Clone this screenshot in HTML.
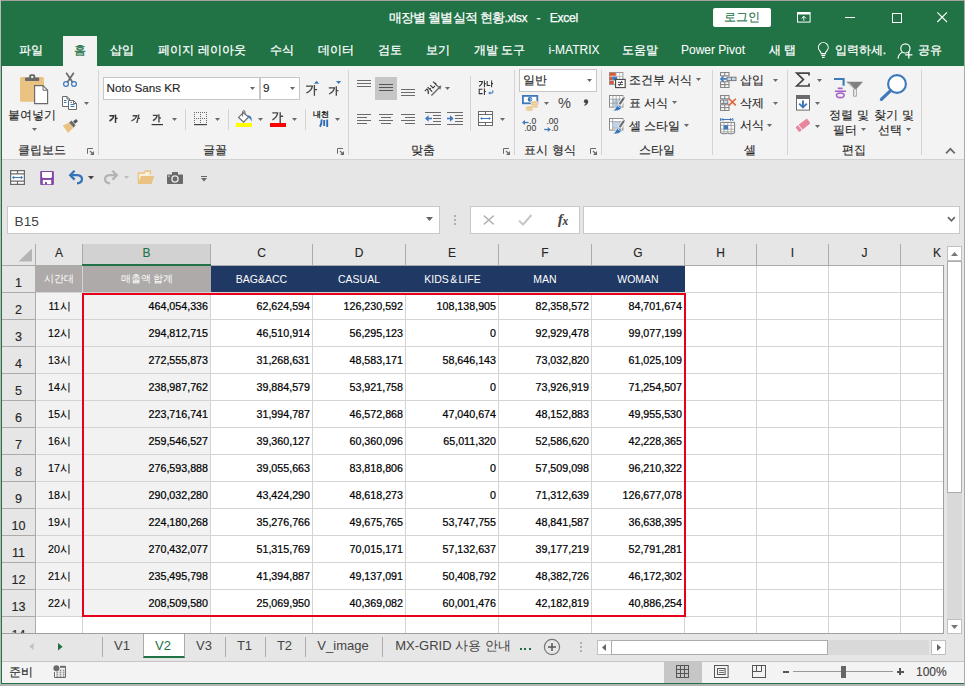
<!DOCTYPE html>
<html lang="ko"><head><meta charset="utf-8"><title>Excel</title>
<style>
html,body{margin:0;padding:0}
body{width:965px;height:686px;position:relative;overflow:hidden;background:#e6e6e6;font-family:"Liberation Sans",sans-serif;font-size:12px;color:#262626}
div{position:absolute;box-sizing:border-box}
svg{position:absolute;overflow:visible}
.t{overflow:visible;-webkit-text-stroke:0.13px}
</style></head>
<body>
<div style="left:0px;top:0px;width:965px;height:66px;background:#217346"></div>
<div class="t" style="left:333.3px;top:10.0px;width:300px;height:16px;line-height:16px;font-size:12.8px;text-align:center;white-space:nowrap;color:#fff;-webkit-text-stroke:0.25px #fff;"><span style="letter-spacing:-0.76px">매장별 월별실적 현황</span><span style="font-size:12.2px;letter-spacing:-0.3px;word-spacing:6.2px">.xlsx - Excel</span></div>
<div style="left:713px;top:8px;width:58px;height:19px;background:#fff;border-radius:2px"></div>
<div class="t" style="left:713.0px;top:9.2px;width:58px;height:16px;line-height:16px;font-size:12px;text-align:center;white-space:nowrap;color:#217346;">로그인</div>
<div style="left:63px;top:36px;width:34px;height:30px;background:#f3f3f3"></div>
<div class="t" style="left:-29.0px;top:41.5px;width:120px;height:16px;line-height:16px;font-size:12px;text-align:center;white-space:nowrap;color:#fff;-webkit-text-stroke:0.25px #fff;">파일</div>
<div class="t" style="left:20.0px;top:41.5px;width:120px;height:16px;line-height:16px;font-size:12px;text-align:center;white-space:nowrap;color:#217346;-webkit-text-stroke:0.25px #217346;">홈</div>
<div class="t" style="left:62.0px;top:41.5px;width:120px;height:16px;line-height:16px;font-size:12px;text-align:center;white-space:nowrap;color:#fff;-webkit-text-stroke:0.25px #fff;">삽입</div>
<div class="t" style="left:142.0px;top:41.5px;width:120px;height:16px;line-height:16px;font-size:12px;text-align:center;white-space:nowrap;color:#fff;-webkit-text-stroke:0.25px #fff;">페이지 레이아웃</div>
<div class="t" style="left:221.5px;top:41.5px;width:120px;height:16px;line-height:16px;font-size:12px;text-align:center;white-space:nowrap;color:#fff;-webkit-text-stroke:0.25px #fff;">수식</div>
<div class="t" style="left:275.5px;top:41.5px;width:120px;height:16px;line-height:16px;font-size:12px;text-align:center;white-space:nowrap;color:#fff;-webkit-text-stroke:0.25px #fff;">데이터</div>
<div class="t" style="left:329.5px;top:41.5px;width:120px;height:16px;line-height:16px;font-size:12px;text-align:center;white-space:nowrap;color:#fff;-webkit-text-stroke:0.25px #fff;">검토</div>
<div class="t" style="left:377.5px;top:41.5px;width:120px;height:16px;line-height:16px;font-size:12px;text-align:center;white-space:nowrap;color:#fff;-webkit-text-stroke:0.25px #fff;">보기</div>
<div class="t" style="left:439.5px;top:41.5px;width:120px;height:16px;line-height:16px;font-size:12px;text-align:center;white-space:nowrap;color:#fff;-webkit-text-stroke:0.25px #fff;">개발 도구</div>
<div class="t" style="left:514.0px;top:41.5px;width:120px;height:16px;line-height:16px;font-size:12px;text-align:center;white-space:nowrap;color:#fff;-webkit-text-stroke:0.05px #fff;">i-MATRIX</div>
<div class="t" style="left:579.5px;top:41.5px;width:120px;height:16px;line-height:16px;font-size:12px;text-align:center;white-space:nowrap;color:#fff;-webkit-text-stroke:0.25px #fff;">도움말</div>
<div class="t" style="left:653.0px;top:41.5px;width:120px;height:16px;line-height:16px;font-size:12px;text-align:center;white-space:nowrap;color:#fff;-webkit-text-stroke:0.05px #fff;">Power Pivot</div>
<div class="t" style="left:722.5px;top:41.5px;width:120px;height:16px;line-height:16px;font-size:12px;text-align:center;white-space:nowrap;color:#fff;-webkit-text-stroke:0.25px #fff;">새 탭</div>
<div class="t" style="left:800.5px;top:41.5px;width:120px;height:16px;line-height:16px;font-size:12px;text-align:center;white-space:nowrap;color:#fff;-webkit-text-stroke:0.25px #fff;">입력하세.</div>
<div class="t" style="left:869.5px;top:41.5px;width:120px;height:16px;line-height:16px;font-size:12px;text-align:center;white-space:nowrap;color:#fff;-webkit-text-stroke:0.25px #fff;">공유</div>
<div style="left:2px;top:66px;width:962px;height:93px;background:#f3f3f3"></div>
<div style="left:2px;top:159px;width:962px;height:1px;background:#d2d2d2"></div>
<svg style="left:18px;top:72px" width="32" height="34" viewBox="0 0 32 34"><rect x="2" y="5" width="24" height="24.8" rx="1.6" fill="#eac282"/><rect x="7" y="5.5" width="14.2" height="3.6" rx="0.8" fill="#6a6a6a"/><rect x="11.2" y="2.2" width="6" height="5" rx="1.6" fill="#6a6a6a"/><rect x="13.2" y="4" width="2" height="2" fill="#f3f3f3"/><path d="M16.6,13.6 H25 L29.6,18.2 V31.6 H16.6 Z" fill="#fff" stroke="#6a6a6a" stroke-width="1.15"/><path d="M25,13.6 V18.2 H29.6" fill="none" stroke="#6a6a6a" stroke-width="1"/></svg>
<div class="t" style="left:2.0px;top:106.5px;width:60px;height:16px;line-height:16px;font-size:11.6px;text-align:center;white-space:nowrap;color:#262626;">붙여넣기</div>
<svg style="left:32.0px;top:128.0px" width="5" height="3" viewBox="0 0 5 3"><polygon points="0,0 5,0 2.5,3" fill="#6a6a6a"/></svg>
<div class="t" style="left:12.0px;top:141.5px;width:60px;height:16px;line-height:16px;font-size:11.6px;text-align:center;white-space:nowrap;color:#262626;">클립보드</div>
<svg style="left:87px;top:148px" width="7" height="7" viewBox="0 0 7 7"><path d="M0.5,5.8 V0.5 H6" fill="none" stroke="#6a6a6a" stroke-width="1"/><path d="M3,3 L5.5,5.5" stroke="#6a6a6a" stroke-width="1.1"/><polygon points="3,7 7,7 7,3" fill="#6a6a6a"/></svg>
<svg style="left:62px;top:72px" width="16" height="16" viewBox="0 0 16 16"><path d="M4.2,0.8 L10.6,10.2 M11.8,0.8 L5.4,10.2" stroke="#6a6a6a" stroke-width="1.7" fill="none"/><circle cx="4" cy="12" r="2.4" fill="none" stroke="#3d79bb" stroke-width="1.2"/><circle cx="12" cy="12" r="2.4" fill="none" stroke="#3d79bb" stroke-width="1.2"/></svg>
<svg style="left:62px;top:96px" width="16" height="14" viewBox="0 0 16 14"><path d="M0.5,0.5 H5 L7.5,3 V10.5 H0.5 Z" fill="#fff" stroke="#6a6a6a"/><path d="M5,0.5 V3 H7.5" fill="none" stroke="#6a6a6a"/><path d="M6.5,4.5 H11.5 L14.5,7.5 V13.5 H6.5 Z" fill="#fff" stroke="#6a6a6a"/><path d="M11.5,4.5 V7.5 H14.5" fill="none" stroke="#6a6a6a"/><path d="M2,4.5 H4.5 M2,6.5 H4.5 M8.5,8.5 H12.5 M8.5,10.5 H12.5 M8.5,6.5 H10" stroke="#3d79bb" stroke-width="1"/></svg>
<svg style="left:84.2px;top:102.3px" width="5" height="3" viewBox="0 0 5 3"><polygon points="0,0 5,0 2.5,3" fill="#6a6a6a"/></svg>
<svg style="left:62px;top:118px" width="17" height="16" viewBox="0 0 17 16"><polygon points="0.8,7.6 7.2,4.6 11.6,9.4 6,15" fill="#eac282"/><polygon points="7.2,4.6 9.4,2.6 13.6,7.2 11.6,9.4" fill="#6a6a6a"/><polygon points="11,3.6 14,1 16,3.2 13,5.8" fill="#555"/></svg>
<div style="left:98px;top:70px;width:1px;height:85px;background:#d4d4d4"></div>
<div style="left:103px;top:77px;width:157px;height:23px;background:#fff;border:1px solid #c6c6c6"></div>
<div style="left:260px;top:77px;width:40px;height:23px;background:#fff;border:1px solid #c6c6c6"></div>
<div class="t" style="left:106.5px;top:79.5px;width:200px;height:16px;line-height:16px;font-size:11.7px;text-align:left;white-space:nowrap;color:#262626;">Noto Sans KR</div>
<div class="t" style="left:263px;top:79.5px;width:200px;height:16px;line-height:16px;font-size:11.7px;text-align:left;white-space:nowrap;color:#262626;">9</div>
<svg style="left:250.0px;top:87.2px" width="5" height="3" viewBox="0 0 5 3"><polygon points="0,0 5,0 2.5,3" fill="#6a6a6a"/></svg>
<svg style="left:290.0px;top:87.2px" width="5" height="3" viewBox="0 0 5 3"><polygon points="0,0 5,0 2.5,3" fill="#6a6a6a"/></svg>
<svg style="left:304px;top:80px" width="40" height="17" viewBox="0 0 40 17"><g fill="none" stroke="#444" stroke-width="1.3"><path d="M2,6.1 H8.4 Q7.6,10.6 2.3,13"/><path d="M10.4,5 V15.8 M10.4,9.6 H13.1"/><path d="M24.8,7.9 H30.4 Q29.8,11.8 25.1,14"/><path d="M32.3,6.2 V15.8 M32.3,10.7 H34.4"/></g><polygon points="10,3.8 12.6,0.7 15.2,3.8" fill="#3d79bb"/><polygon points="32,1 37.2,1 34.6,3.9" fill="#3d79bb"/></svg>
<svg style="left:108px;top:113px" width="60" height="14" viewBox="0 0 60 14"><g transform="translate(1.2,1.6) scale(0.82)" fill="none" stroke="#333" stroke-width="1.75" ><path d="M0.3,1.4 H5.6 Q5,5.6 0.4,7.8"/><path d="M7.7,0 V10.2"/><path d="M7.7,4.6 H10.2"/></g><g transform="translate(24.6,1.6) scale(0.82) skewX(-14)" fill="none" stroke="#444" stroke-width="1.65" transform-origin="0 0"><path d="M0.3,1.4 H5.6 Q5,5.6 0.4,7.8"/><path d="M7.7,0 V10.2"/><path d="M7.7,4.6 H10.2"/></g><g transform="translate(44.6,1.2) scale(0.82)" fill="none" stroke="#444" stroke-width="1.65" ><path d="M0.3,1.4 H5.6 Q5,5.6 0.4,7.8"/><path d="M7.7,0 V10.2"/><path d="M7.7,4.6 H10.2"/></g><path d="M43.6,11.6 H55" stroke="#333" stroke-width="1.2"/></svg>
<svg style="left:172.1px;top:118.0px" width="5" height="3" viewBox="0 0 5 3"><polygon points="0,0 5,0 2.5,3" fill="#6a6a6a"/></svg>
<div style="left:185px;top:109px;width:1px;height:21px;background:#d4d4d4"></div>
<svg style="left:194px;top:112px" width="14" height="14" viewBox="0 0 14 14"><g fill="#6a6a6a"><rect x="0" y="0" width="1" height="1"/><rect x="0" y="6" width="1" height="1"/><rect x="0" y="0" width="1" height="1"/><rect x="6" y="0" width="1" height="1"/><rect x="12" y="0" width="1" height="1"/><rect x="2" y="0" width="1" height="1"/><rect x="2" y="6" width="1" height="1"/><rect x="0" y="2" width="1" height="1"/><rect x="6" y="2" width="1" height="1"/><rect x="12" y="2" width="1" height="1"/><rect x="4" y="0" width="1" height="1"/><rect x="4" y="6" width="1" height="1"/><rect x="0" y="4" width="1" height="1"/><rect x="6" y="4" width="1" height="1"/><rect x="12" y="4" width="1" height="1"/><rect x="6" y="0" width="1" height="1"/><rect x="6" y="6" width="1" height="1"/><rect x="0" y="6" width="1" height="1"/><rect x="6" y="6" width="1" height="1"/><rect x="12" y="6" width="1" height="1"/><rect x="8" y="0" width="1" height="1"/><rect x="8" y="6" width="1" height="1"/><rect x="0" y="8" width="1" height="1"/><rect x="6" y="8" width="1" height="1"/><rect x="12" y="8" width="1" height="1"/><rect x="10" y="0" width="1" height="1"/><rect x="10" y="6" width="1" height="1"/><rect x="0" y="10" width="1" height="1"/><rect x="6" y="10" width="1" height="1"/><rect x="12" y="10" width="1" height="1"/><rect x="12" y="0" width="1" height="1"/><rect x="12" y="6" width="1" height="1"/><rect x="0" y="12" width="1" height="1"/><rect x="6" y="12" width="1" height="1"/><rect x="12" y="12" width="1" height="1"/><rect x="0" y="12" width="13" height="1.2" fill="#444"/></g></svg>
<svg style="left:214.9px;top:118.0px" width="5" height="3" viewBox="0 0 5 3"><polygon points="0,0 5,0 2.5,3" fill="#6a6a6a"/></svg>
<div style="left:228px;top:109px;width:1px;height:21px;background:#d4d4d4"></div>
<svg style="left:235px;top:110px" width="19" height="18" viewBox="0 0 19 18"><path d="M8.2,2.6 L3.6,7.4 L8.6,12.2 L13.6,7 Z" fill="#fff" stroke="#6a6a6a" stroke-width="1.15"/><path d="M7.6,6.4 V2 Q7.6,0.6 8.8,0.6 Q10,0.6 10,2 V4.4" fill="none" stroke="#6a6a6a" stroke-width="1"/><path d="M12.6,5.2 Q17.6,5.6 16.6,11.6 Q15.6,8.4 13.4,7.6 Z" fill="#3d79bb"/><rect x="0.8" y="13" width="16.2" height="4" fill="#ffff00"/></svg>
<svg style="left:258.0px;top:118.1px" width="5" height="3" viewBox="0 0 5 3"><polygon points="0,0 5,0 2.5,3" fill="#6a6a6a"/></svg>
<svg style="left:269px;top:110px" width="18" height="18" viewBox="0 0 18 18"><g fill="none" stroke="#4a4a4a" stroke-width="1.4"><path d="M3.3,2.9 H8.6 Q8,7.4 3.4,9.8"/><path d="M11.2,2.2 V13 M11.2,6.2 H14.1"/></g><rect x="1" y="13" width="16" height="4" fill="#ff0000"/></svg>
<svg style="left:292.0px;top:118.1px" width="5" height="3" viewBox="0 0 5 3"><polygon points="0,0 5,0 2.5,3" fill="#6a6a6a"/></svg>
<div style="left:305px;top:109px;width:1px;height:21px;background:#d4d4d4"></div>
<div class="t" style="left:306.0px;top:110.1px;width:30px;height:9px;line-height:9px;font-size:7.6px;text-align:center;white-space:nowrap;color:#111;-webkit-text-stroke:0.3px;">내천</div>
<svg style="left:319px;top:119px" width="10" height="9" viewBox="0 0 10 9"><path d="M2.6,0.4 Q2.8,5 1,7.8 M5.2,1 V7 M8.2,0.4 V8" fill="none" stroke="#2e6db4" stroke-width="1.9"/></svg>
<svg style="left:334.9px;top:118.1px" width="5" height="3" viewBox="0 0 5 3"><polygon points="0,0 5,0 2.5,3" fill="#6a6a6a"/></svg>
<div class="t" style="left:185.0px;top:141.5px;width:60px;height:16px;line-height:16px;font-size:11.6px;text-align:center;white-space:nowrap;color:#262626;">글꼴</div>
<svg style="left:337px;top:148px" width="7" height="7" viewBox="0 0 7 7"><path d="M0.5,5.8 V0.5 H6" fill="none" stroke="#6a6a6a" stroke-width="1"/><path d="M3,3 L5.5,5.5" stroke="#6a6a6a" stroke-width="1.1"/><polygon points="3,7 7,7 7,3" fill="#6a6a6a"/></svg>
<div style="left:348px;top:70px;width:1px;height:85px;background:#d4d4d4"></div>
<div style="left:357px;top:80px;width:14px;height:1px;background:#6a6a6a"></div><div style="left:357px;top:83px;width:14px;height:1px;background:#6a6a6a"></div><div style="left:357px;top:86px;width:14px;height:1px;background:#6a6a6a"></div>
<div style="left:375px;top:77px;width:22px;height:23px;background:#c6c6c6"></div>
<div style="left:379px;top:84px;width:14px;height:1px;background:#555"></div><div style="left:379px;top:87px;width:14px;height:1px;background:#555"></div><div style="left:379px;top:90px;width:14px;height:1px;background:#555"></div>
<div style="left:401px;top:89px;width:14px;height:1px;background:#6a6a6a"></div><div style="left:401px;top:92px;width:14px;height:1px;background:#6a6a6a"></div><div style="left:401px;top:95px;width:14px;height:1px;background:#6a6a6a"></div>
<svg style="left:423px;top:79px" width="20" height="19" viewBox="0 0 20 19"><path d="M8.4,16.4 L16.6,8.2" stroke="#6a6a6a" stroke-width="1.4"/><polygon points="18.4,6.4 17.4,10.8 14,7.4" fill="#6a6a6a"/><g transform="translate(1.4,11.6) rotate(-45)" fill="none" stroke="#333" stroke-width="1.05"><path d="M0,0.6 H3 Q3,3.6 0.2,5.2"/><path d="M4.8,-0.2 V6.2 M4.8,2.8 H6.2"/><path d="M8,0.4 V4.2 H10.8"/><path d="M12.4,-0.2 V6.2 M12.4,2.8 H13.8"/></g></svg>
<svg style="left:445.1px;top:87.1px" width="5" height="3" viewBox="0 0 5 3"><polygon points="0,0 5,0 2.5,3" fill="#6a6a6a"/></svg>
<div style="left:470px;top:76px;width:1px;height:55px;background:#d4d4d4"></div>
<svg style="left:478px;top:80px" width="17" height="16" viewBox="0 0 17 16"><g fill="none" stroke="#333" stroke-width="1.05"><path d="M1,1.4 H4.4 Q4.2,4.6 1,6.4"/><path d="M6.4,0.4 V7.2 M6.4,3.6 H7.8"/><path d="M9.2,1 V5.4 H12.2"/><path d="M13.6,0.4 V7.2 M13.6,3.6 H15"/><path d="M4.4,9.2 H1.2 V13.6 H4.6"/><path d="M6.4,8.4 V15 M6.4,11.4 H7.8"/></g></svg>
<svg style="left:488px;top:90px" width="6" height="6" viewBox="0 0 6 6"><path d="M4.8,0.2 V3 H1.4" fill="none" stroke="#3d79bb" stroke-width="1"/><polygon points="0.2,3 2.4,1.2 2.4,4.8" fill="#3d79bb"/></svg>
<div style="left:357px;top:114px;width:14px;height:1px;background:#6a6a6a"></div><div style="left:357px;top:117px;width:10px;height:1px;background:#6a6a6a"></div><div style="left:357px;top:120px;width:14px;height:1px;background:#6a6a6a"></div><div style="left:357px;top:123px;width:10px;height:1px;background:#6a6a6a"></div>
<div style="left:379.0px;top:114px;width:14px;height:1px;background:#6a6a6a"></div><div style="left:381.0px;top:117px;width:10px;height:1px;background:#6a6a6a"></div><div style="left:379.0px;top:120px;width:14px;height:1px;background:#6a6a6a"></div><div style="left:381.0px;top:123px;width:10px;height:1px;background:#6a6a6a"></div>
<div style="left:401px;top:114px;width:14px;height:1px;background:#6a6a6a"></div><div style="left:405px;top:117px;width:10px;height:1px;background:#6a6a6a"></div><div style="left:401px;top:120px;width:14px;height:1px;background:#6a6a6a"></div><div style="left:405px;top:123px;width:10px;height:1px;background:#6a6a6a"></div>
<svg style="left:425px;top:112px" width="16" height="13" viewBox="0 0 16 13"><path d="M0,0.5 H16 M8,3.5 H16 M8,6.5 H16 M8,9.5 H16 M0,12.5 H16" stroke="#6a6a6a" stroke-width="1"/><path d="M1.2,6.5 H7" stroke="#3d79bb" stroke-width="1.6"/><polygon points="0,6.5 3.6,3.2 3.6,9.8" fill="#3d79bb"/></svg>
<svg style="left:447px;top:112px" width="16" height="13" viewBox="0 0 16 13"><path d="M0,0.5 H16 M8,3.5 H16 M8,6.5 H16 M8,9.5 H16 M0,12.5 H16" stroke="#6a6a6a" stroke-width="1"/><path d="M0,6.5 H5.2" stroke="#3d79bb" stroke-width="1.6"/><polygon points="6.6,6.5 3,3.2 3,9.8" fill="#3d79bb"/></svg>
<svg style="left:478px;top:111px" width="15" height="15" viewBox="0 0 15 15"><rect x="0.5" y="0.5" width="14" height="14" fill="#fff" stroke="#6a6a6a"/><path d="M0.5,3.5 H14.5 M0.5,11.5 H14.5 M7.5,0.5 V3.5 M7.5,11.5 V14.5" stroke="#6a6a6a" stroke-width="1"/><path d="M3,7.5 H12" stroke="#3d79bb" stroke-width="1"/><polygon points="2,7.5 4.2,5.9 4.2,9.1" fill="#3d79bb"/><polygon points="13,7.5 10.8,5.9 10.8,9.1" fill="#3d79bb"/></svg>
<svg style="left:500.0px;top:118.1px" width="5" height="3" viewBox="0 0 5 3"><polygon points="0,0 5,0 2.5,3" fill="#6a6a6a"/></svg>
<div class="t" style="left:393.0px;top:141.5px;width:60px;height:16px;line-height:16px;font-size:11.6px;text-align:center;white-space:nowrap;color:#262626;">맞춤</div>
<svg style="left:503px;top:148px" width="7" height="7" viewBox="0 0 7 7"><path d="M0.5,5.8 V0.5 H6" fill="none" stroke="#6a6a6a" stroke-width="1"/><path d="M3,3 L5.5,5.5" stroke="#6a6a6a" stroke-width="1.1"/><polygon points="3,7 7,7 7,3" fill="#6a6a6a"/></svg>
<div style="left:514px;top:70px;width:1px;height:85px;background:#d4d4d4"></div>
<div style="left:519px;top:69px;width:78px;height:23px;background:#fff;border:1px solid #c6c6c6"></div>
<div class="t" style="left:522.5px;top:71.5px;width:200px;height:16px;line-height:16px;font-size:11.6px;text-align:left;white-space:nowrap;color:#262626;">일반</div>
<svg style="left:586.9px;top:79.2px" width="5" height="3" viewBox="0 0 5 3"><polygon points="0,0 5,0 2.5,3" fill="#6a6a6a"/></svg>
<svg style="left:522px;top:95px" width="17" height="17" viewBox="0 0 17 17"><rect x="0.9" y="0.9" width="14.4" height="7.4" fill="#fff" stroke="#3d79bb" stroke-width="1.8"/><circle cx="8" cy="4.4" r="2.3" fill="#3d79bb"/><path d="M8.4,3.4 Q9.8,4.4 8.6,5.4" fill="none" stroke="#fff" stroke-width="0.9"/><g fill="#eac282" stroke="#f3f3f3" stroke-width="0.6"><ellipse cx="12.4" cy="11.4" rx="3.8" ry="1.5"/><ellipse cx="12.4" cy="9.4" rx="3.8" ry="1.5"/><ellipse cx="12.4" cy="7.4" rx="3.8" ry="1.5"/><ellipse cx="7.4" cy="14.6" rx="3.8" ry="1.5"/><ellipse cx="7.4" cy="12.6" rx="3.8" ry="1.5"/></g></svg>
<svg style="left:543.8px;top:102.1px" width="5" height="3" viewBox="0 0 5 3"><polygon points="0,0 5,0 2.5,3" fill="#6a6a6a"/></svg>
<div class="t" style="left:554.6px;top:94.4px;width:20px;height:18px;line-height:18px;font-size:14.6px;text-align:center;white-space:nowrap;color:#444;-webkit-text-stroke:0;">%</div>
<svg style="left:583px;top:99px" width="6" height="8" viewBox="0 0 6 8"><circle cx="3" cy="2.3" r="2.1" fill="#444"/><path d="M5.1,2.2 Q5.4,5.4 1.5,6.8 L1.1,6 Q3.3,4.8 3,3 Z" fill="#444"/></svg>
<div class="t" style="left:520.2px;top:116.7px;width:16px;height:9px;line-height:9px;font-size:8.6px;text-align:right;white-space:nowrap;color:#444;">.0</div>
<div class="t" style="left:516.2px;top:123.9px;width:20px;height:9px;line-height:9px;font-size:8.6px;text-align:right;white-space:nowrap;color:#444;">.00</div>
<svg style="left:522px;top:119px" width="7" height="7" viewBox="0 0 7 7"><path d="M1.4,3.5 H6.6" stroke="#3d79bb" stroke-width="1.3"/><polygon points="0,3.5 3,1 3,6" fill="#3d79bb"/></svg>
<div class="t" style="left:538.4px;top:116.7px;width:20px;height:9px;line-height:9px;font-size:8.6px;text-align:right;white-space:nowrap;color:#444;">.00</div>
<div class="t" style="left:542.4px;top:123.9px;width:16px;height:9px;line-height:9px;font-size:8.6px;text-align:right;white-space:nowrap;color:#444;">.0</div>
<svg style="left:543.6px;top:126.2px" width="7" height="7" viewBox="0 0 7 7"><path d="M0.2,3.5 H5.4" stroke="#3d79bb" stroke-width="1.3"/><polygon points="6.8,3.5 3.8,1 3.8,6" fill="#3d79bb"/></svg>
<div class="t" style="left:510.0px;top:141.5px;width:80px;height:16px;line-height:16px;font-size:11.6px;text-align:center;white-space:nowrap;color:#262626;">표시 형식</div>
<svg style="left:590px;top:148px" width="7" height="7" viewBox="0 0 7 7"><path d="M0.5,5.8 V0.5 H6" fill="none" stroke="#6a6a6a" stroke-width="1"/><path d="M3,3 L5.5,5.5" stroke="#6a6a6a" stroke-width="1.1"/><polygon points="3,7 7,7 7,3" fill="#6a6a6a"/></svg>
<div style="left:601px;top:70px;width:1px;height:85px;background:#d4d4d4"></div>
<svg style="left:609px;top:72px" width="17" height="16" viewBox="0 0 17 16"><rect x="0.5" y="0.5" width="13.4" height="12" fill="#fff" stroke="#9a9a9a"/><path d="M0.5,4.4 H14 M0.5,8.5 H14 M7.2,0.5 V12.5 M10.6,0.5 V12.5" stroke="#b0b0b0" stroke-width="0.8"/><rect x="0.6" y="0.8" width="6.2" height="3" fill="#d9573b"/><rect x="0.6" y="4.9" width="2.6" height="3.2" fill="#d9573b"/><rect x="3.2" y="4.9" width="5" height="3.2" fill="#3d79bb"/><rect x="0.6" y="9" width="4.2" height="3" fill="#d9573b"/><rect x="6.6" y="7.4" width="9.6" height="8.2" fill="#fff" stroke="#444" stroke-width="1.1"/><path d="M8.8,10.4 H14 M8.8,12.6 H14 M13,8.8 L10,14.2" stroke="#444" stroke-width="0.9"/></svg>
<div class="t" style="left:628.6px;top:71.7px;width:200px;height:16px;line-height:16px;font-size:11.9px;text-align:left;white-space:nowrap;color:#262626;">조건부 서식</div>
<svg style="left:696.1px;top:78.1px" width="5" height="3" viewBox="0 0 5 3"><polygon points="0,0 5,0 2.5,3" fill="#6a6a6a"/></svg>
<svg style="left:609px;top:95px" width="17" height="17" viewBox="0 0 17 17"><rect x="0.5" y="0.5" width="13.4" height="11.6" fill="#fff" stroke="#8a8a8a"/><rect x="3.8" y="4.2" width="6.8" height="7.6" fill="#bdd3ea"/><path d="M0.5,4.2 H14 M0.5,8.2 H14 M3.8,0.5 V12 M7.2,0.5 V12 M10.6,0.5 V12" stroke="#9a9a9a" stroke-width="0.8"/><path d="M15.4,2.4 L10.8,9.6" stroke="#f3f3f3" stroke-width="4.4"/><path d="M15.8,1.8 L15.2,4.2 L11.6,9.8 L9.8,8.6 L13.6,3 Z" fill="#6a6a6a"/><path d="M3.6,15.6 Q6.4,14.8 7,12.2 Q8,9.6 10.6,10.2 Q13.4,11.4 12,13.8 Q9.4,16.8 3.6,15.6 Z" fill="#3474ba" stroke="#f3f3f3" stroke-width="0.7"/><path d="M9,11.4 Q10.6,11.4 11,12.8" fill="none" stroke="#dbe7f5" stroke-width="0.9"/></svg>
<div class="t" style="left:628.6px;top:94.7px;width:200px;height:16px;line-height:16px;font-size:11.9px;text-align:left;white-space:nowrap;color:#262626;">표 서식</div>
<svg style="left:672.2px;top:101.1px" width="5" height="3" viewBox="0 0 5 3"><polygon points="0,0 5,0 2.5,3" fill="#6a6a6a"/></svg>
<svg style="left:609px;top:118px" width="17" height="17" viewBox="0 0 17 17"><rect x="0.5" y="0.5" width="13.4" height="11.6" fill="#fff" stroke="#8a8a8a"/><rect x="3.8" y="3.8" width="7" height="6.2" fill="#bdd3ea"/><path d="M0.5,3.6 H14 M3.6,0.5 V12 M11,3.6 V12 M3.6,10.2 H14" stroke="#9a9a9a" stroke-width="0.8"/><path d="M15.4,2.4 L10.8,9.6" stroke="#f3f3f3" stroke-width="4.4"/><path d="M15.8,1.8 L15.2,4.2 L11.6,9.8 L9.8,8.6 L13.6,3 Z" fill="#6a6a6a"/><path d="M3.6,15.6 Q6.4,14.8 7,12.2 Q8,9.6 10.6,10.2 Q13.4,11.4 12,13.8 Q9.4,16.8 3.6,15.6 Z" fill="#3474ba" stroke="#f3f3f3" stroke-width="0.7"/><path d="M9,11.4 Q10.6,11.4 11,12.8" fill="none" stroke="#dbe7f5" stroke-width="0.9"/></svg>
<div class="t" style="left:628.6px;top:117.7px;width:200px;height:16px;line-height:16px;font-size:11.9px;text-align:left;white-space:nowrap;color:#262626;">셀 스타일</div>
<svg style="left:684.1px;top:124.1px" width="5" height="3" viewBox="0 0 5 3"><polygon points="0,0 5,0 2.5,3" fill="#6a6a6a"/></svg>
<div class="t" style="left:627.0px;top:141.5px;width:60px;height:16px;line-height:16px;font-size:11.6px;text-align:center;white-space:nowrap;color:#262626;">스타일</div>
<div style="left:712px;top:70px;width:1px;height:85px;background:#d4d4d4"></div>
<svg style="left:720px;top:72px" width="17" height="16" viewBox="0 0 17 16"><g fill="#fff" stroke="#7a7a7a" stroke-width="1"><rect x="0.6" y="0.6" width="8.4" height="3.2"/><path d="M4.8,0.6 V3.8"/><rect x="0.6" y="9.8" width="8.4" height="5.6"/><path d="M4.8,9.8 V15.4 M0.6,12.6 H9"/></g><rect x="7" y="5.2" width="9" height="3.4" fill="#c5d9ee" stroke="#7a7a7a"/><path d="M11.5,5.2 V8.6" stroke="#7a7a7a"/><path d="M1.8,6.9 H6.6" stroke="#3d79bb" stroke-width="1.7"/><path d="M3.6,4.2 L0.9,6.9 L3.6,9.6" fill="none" stroke="#3d79bb" stroke-width="1.5"/></svg>
<div class="t" style="left:739.6px;top:72.3px;width:200px;height:16px;line-height:16px;font-size:11.9px;text-align:left;white-space:nowrap;color:#262626;">삽입</div>
<svg style="left:773.1px;top:78.7px" width="5" height="3" viewBox="0 0 5 3"><polygon points="0,0 5,0 2.5,3" fill="#6a6a6a"/></svg>
<svg style="left:720px;top:95px" width="17" height="16" viewBox="0 0 17 16"><g fill="#fff" stroke="#7a7a7a" stroke-width="1"><rect x="0.6" y="0.6" width="8.4" height="3.2"/><path d="M4.8,0.6 V3.8"/><rect x="0.6" y="9.8" width="8.4" height="5.6"/><path d="M4.8,9.8 V15.4 M0.6,12.6 H9"/><path d="M3.2,5 H0.6 V8.6 H3.2" fill="none"/></g><rect x="3.4" y="5" width="4.4" height="3.6" fill="#c5d9ee" stroke="#7a7a7a" stroke-width="0.9"/><path d="M9,3.8 L15.8,10.4 M15.8,3.8 L9,10.4" stroke="#e0633a" stroke-width="1.6"/></svg>
<div class="t" style="left:739.6px;top:95.1px;width:200px;height:16px;line-height:16px;font-size:11.9px;text-align:left;white-space:nowrap;color:#262626;">삭제</div>
<svg style="left:773.1px;top:101.9px" width="5" height="3" viewBox="0 0 5 3"><polygon points="0,0 5,0 2.5,3" fill="#6a6a6a"/></svg>
<svg style="left:720px;top:118px" width="16" height="17" viewBox="0 0 16 17"><path d="M0.6,0 V3 M12.8,0 V3 M1.8,1.5 H11.6" stroke="#3d79bb" stroke-width="1"/><polygon points="1,1.5 3.4,0 3.4,3" fill="#3d79bb"/><polygon points="12.4,1.5 10,0 10,3" fill="#3d79bb"/><path d="M0.6,15 V4.4 H14.6 V15" fill="#fff" stroke="#7a7a7a"/><path d="M0.6,7.4 H14.6 M0.6,11.2 H14.6 M0.6,13.8 H14.6 M4,4.4 V15 M7.8,4.4 V15 M11.2,4.4 V15" stroke="#9a9a9a" stroke-width="0.8"/><rect x="3.6" y="7.2" width="4.4" height="4.2" fill="#3d79bb"/><path d="M0.6,15 Q4,16.8 7.6,15.2 Q11,16.8 14.6,15" fill="none" stroke="#7a7a7a" stroke-width="1"/></svg>
<div class="t" style="left:739.6px;top:117.3px;width:200px;height:16px;line-height:16px;font-size:11.9px;text-align:left;white-space:nowrap;color:#262626;">서식</div>
<svg style="left:767.0px;top:123.9px" width="5" height="3" viewBox="0 0 5 3"><polygon points="0,0 5,0 2.5,3" fill="#6a6a6a"/></svg>
<div class="t" style="left:735.4px;top:141.5px;width:30px;height:16px;line-height:16px;font-size:11.6px;text-align:center;white-space:nowrap;color:#262626;">셀</div>
<div style="left:787px;top:70px;width:1px;height:85px;background:#d4d4d4"></div>
<svg style="left:795px;top:72px" width="16" height="16" viewBox="0 0 16 16"><path d="M14,3.6 V1.2 H1.8 L8.4,7.6 L1.8,14 H14 V11.6" fill="none" stroke="#444" stroke-width="1.7" stroke-linejoin="miter"/></svg>
<svg style="left:817.0px;top:78.7px" width="5" height="3" viewBox="0 0 5 3"><polygon points="0,0 5,0 2.5,3" fill="#6a6a6a"/></svg>
<svg style="left:796px;top:95px" width="14" height="16" viewBox="0 0 14 16"><rect x="0.5" y="0.5" width="13" height="14.6" fill="#fff" stroke="#6a6a6a"/><rect x="0" y="0" width="14" height="4" fill="#6a6a6a"/><path d="M7,5.4 V12" stroke="#3d79bb" stroke-width="2"/><path d="M3.2,8.6 L7,12.4 L10.8,8.6" fill="none" stroke="#3d79bb" stroke-width="2"/></svg>
<svg style="left:814.9px;top:101.9px" width="5" height="3" viewBox="0 0 5 3"><polygon points="0,0 5,0 2.5,3" fill="#6a6a6a"/></svg>
<svg style="left:796px;top:119px" width="14" height="13" viewBox="0 0 14 13"><g transform="translate(6.8,6.4) rotate(-38)"><rect x="-7" y="-3.1" width="14.4" height="6.2" rx="1.2" fill="#e8879c"/><path d="M-3.2,-3.6 V3.6" stroke="#f3f3f3" stroke-width="1"/></g></svg>
<svg style="left:814.9px;top:124.5px" width="5" height="3" viewBox="0 0 5 3"><polygon points="0,0 5,0 2.5,3" fill="#6a6a6a"/></svg>
<svg style="left:833px;top:77px" width="32" height="22" viewBox="0 0 32 22"><path d="M1,2 H10.6 V8.8" fill="none" stroke="#3d79bb" stroke-width="2.1"/><path d="M4.8,11.4 H9.6 M1.8,14.3 H13" stroke="#a462c8" stroke-width="1.6"/><ellipse cx="7.3" cy="18.3" rx="3.8" ry="2.3" fill="none" stroke="#a462c8" stroke-width="1.6"/><path d="M13.4,4.8 H30 L23.6,11.8 V19.6 H20.2 V11.8 Z" fill="#808080"/><path d="M15.6,6 L21.3,12.2 V18.6 H22.4 V12.2" fill="none" stroke="#f3f3f3" stroke-width="1"/></svg>
<div class="t" style="left:819.0px;top:106.7px;width:60px;height:16px;line-height:16px;font-size:11.9px;text-align:center;white-space:nowrap;color:#262626;">정렬 및</div>
<div class="t" style="left:825.0px;top:121.5px;width:40px;height:16px;line-height:16px;font-size:11.9px;text-align:center;white-space:nowrap;color:#262626;">필터</div>
<svg style="left:860.9px;top:127.69999999999999px" width="5" height="3" viewBox="0 0 5 3"><polygon points="0,0 5,0 2.5,3" fill="#6a6a6a"/></svg>
<svg style="left:878px;top:72px" width="32" height="32" viewBox="0 0 32 32"><circle cx="19" cy="12" r="8.9" fill="#fff" stroke="#3d79bb" stroke-width="2.1"/><path d="M12.6,18.6 L3.4,27.4" stroke="#3d79bb" stroke-width="3.2" stroke-linecap="round"/></svg>
<div class="t" style="left:864.0px;top:106.7px;width:60px;height:16px;line-height:16px;font-size:11.9px;text-align:center;white-space:nowrap;color:#262626;">찾기 및</div>
<div class="t" style="left:870.0px;top:121.5px;width:40px;height:16px;line-height:16px;font-size:11.9px;text-align:center;white-space:nowrap;color:#262626;">선택</div>
<svg style="left:906.2px;top:127.69999999999999px" width="5" height="3" viewBox="0 0 5 3"><polygon points="0,0 5,0 2.5,3" fill="#6a6a6a"/></svg>
<div class="t" style="left:834.0px;top:141.5px;width:40px;height:16px;line-height:16px;font-size:11.6px;text-align:center;white-space:nowrap;color:#262626;">편집</div>
<div style="left:921px;top:70px;width:1px;height:85px;background:#d4d4d4"></div>
<svg style="left:945px;top:147px" width="11" height="8" viewBox="0 0 11 8"><path d="M1,6.4 L5.4,1.8 L9.8,6.4" fill="none" stroke="#6a6a6a" stroke-width="1.7"/></svg>
<div style="left:7px;top:206px;width:433px;height:28px;background:#fff;border:1px solid #c8c8c8"></div>
<div class="t" style="left:14.6px;top:212.6px;width:200px;height:18px;line-height:18px;font-size:13.6px;text-align:left;white-space:nowrap;color:#444;-webkit-text-stroke:0;">B15</div>
<div style="left:470px;top:206px;width:110px;height:28px;background:#fff;border:1px solid #c8c8c8"></div>
<div style="left:583px;top:206px;width:377px;height:28px;background:#fff;border:1px solid #c8c8c8"></div>
<div style="left:36px;top:266px;width:907px;height:367px;background:#fff"></div>
<div style="left:36px;top:293px;width:46px;height:324px;background:#f2f2f2"></div>
<div style="left:83px;top:293px;width:127px;height:324px;background:#f2f2f2"></div>
<div style="left:36px;top:266px;width:46px;height:26px;background:#aeaaaa"></div>
<div style="left:83px;top:266px;width:128px;height:26px;background:#aeaaaa"></div>
<div style="left:211px;top:266px;width:474px;height:26px;background:#203864"></div>
<div style="left:83px;top:244px;width:128px;height:22px;background:#d2d2d2;border-bottom:2px solid #217346"></div>
<div style="left:82px;top:266px;width:1px;height:367px;background:#d4d4d4"></div>
<div style="left:210px;top:266px;width:1px;height:367px;background:#d4d4d4"></div>
<div style="left:312px;top:266px;width:1px;height:367px;background:#d4d4d4"></div>
<div style="left:405px;top:266px;width:1px;height:367px;background:#d4d4d4"></div>
<div style="left:498px;top:266px;width:1px;height:367px;background:#d4d4d4"></div>
<div style="left:591px;top:266px;width:1px;height:367px;background:#d4d4d4"></div>
<div style="left:684px;top:266px;width:1px;height:367px;background:#d4d4d4"></div>
<div style="left:756px;top:266px;width:1px;height:367px;background:#d4d4d4"></div>
<div style="left:828px;top:266px;width:1px;height:367px;background:#d4d4d4"></div>
<div style="left:900px;top:266px;width:1px;height:367px;background:#d4d4d4"></div>
<div style="left:943px;top:266px;width:1px;height:367px;background:#d4d4d4"></div>
<div style="left:36px;top:292px;width:907px;height:1px;background:#d4d4d4"></div>
<div style="left:36px;top:319px;width:907px;height:1px;background:#d4d4d4"></div>
<div style="left:36px;top:346px;width:907px;height:1px;background:#d4d4d4"></div>
<div style="left:36px;top:373px;width:907px;height:1px;background:#d4d4d4"></div>
<div style="left:36px;top:400px;width:907px;height:1px;background:#d4d4d4"></div>
<div style="left:36px;top:427px;width:907px;height:1px;background:#d4d4d4"></div>
<div style="left:36px;top:454px;width:907px;height:1px;background:#d4d4d4"></div>
<div style="left:36px;top:481px;width:907px;height:1px;background:#d4d4d4"></div>
<div style="left:36px;top:508px;width:907px;height:1px;background:#d4d4d4"></div>
<div style="left:36px;top:535px;width:907px;height:1px;background:#d4d4d4"></div>
<div style="left:36px;top:562px;width:907px;height:1px;background:#d4d4d4"></div>
<div style="left:36px;top:589px;width:907px;height:1px;background:#d4d4d4"></div>
<div style="left:36px;top:616px;width:907px;height:1px;background:#d4d4d4"></div>
<div style="left:211px;top:266px;width:474px;height:26px;background:#203864"></div>
<div style="left:36px;top:266px;width:46px;height:26px;background:#aeaaaa"></div>
<div style="left:83px;top:266px;width:128px;height:26px;background:#aeaaaa"></div>
<div style="left:35px;top:244px;width:1px;height:389px;background:#ababab"></div>
<div style="left:2px;top:265px;width:34px;height:1px;background:#ababab"></div>
<div style="left:312px;top:244px;width:1px;height:21px;background:#ababab"></div>
<div style="left:405px;top:244px;width:1px;height:21px;background:#ababab"></div>
<div style="left:498px;top:244px;width:1px;height:21px;background:#ababab"></div>
<div style="left:591px;top:244px;width:1px;height:21px;background:#ababab"></div>
<div style="left:684px;top:244px;width:1px;height:21px;background:#ababab"></div>
<div style="left:756px;top:244px;width:1px;height:21px;background:#ababab"></div>
<div style="left:828px;top:244px;width:1px;height:21px;background:#ababab"></div>
<div style="left:900px;top:244px;width:1px;height:21px;background:#ababab"></div>
<div style="left:82px;top:244px;width:1px;height:21px;background:#ababab"></div>
<div style="left:210px;top:244px;width:1px;height:21px;background:#ababab"></div>
<div style="left:82px;top:264px;width:129px;height:2px;background:#217346"></div>
<div style="left:36px;top:265px;width:46px;height:1px;background:#ababab"></div>
<div style="left:211px;top:265px;width:732px;height:1px;background:#ababab"></div>
<div style="left:2px;top:292px;width:33px;height:1px;background:#ababab"></div>
<div style="left:2px;top:319px;width:33px;height:1px;background:#ababab"></div>
<div style="left:2px;top:346px;width:33px;height:1px;background:#ababab"></div>
<div style="left:2px;top:373px;width:33px;height:1px;background:#ababab"></div>
<div style="left:2px;top:400px;width:33px;height:1px;background:#ababab"></div>
<div style="left:2px;top:427px;width:33px;height:1px;background:#ababab"></div>
<div style="left:2px;top:454px;width:33px;height:1px;background:#ababab"></div>
<div style="left:2px;top:481px;width:33px;height:1px;background:#ababab"></div>
<div style="left:2px;top:508px;width:33px;height:1px;background:#ababab"></div>
<div style="left:2px;top:535px;width:33px;height:1px;background:#ababab"></div>
<div style="left:2px;top:562px;width:33px;height:1px;background:#ababab"></div>
<div style="left:2px;top:589px;width:33px;height:1px;background:#ababab"></div>
<div style="left:2px;top:616px;width:33px;height:1px;background:#ababab"></div>
<div class="t" style="left:39.0px;top:244.5px;width:40px;height:16px;line-height:16px;font-size:12px;text-align:center;white-space:nowrap;color:#262626;">A</div>
<div class="t" style="left:126.5px;top:244.5px;width:40px;height:16px;line-height:16px;font-size:12px;text-align:center;white-space:nowrap;color:#217346;">B</div>
<div class="t" style="left:241.5px;top:244.5px;width:40px;height:16px;line-height:16px;font-size:12px;text-align:center;white-space:nowrap;color:#262626;">C</div>
<div class="t" style="left:339.0px;top:244.5px;width:40px;height:16px;line-height:16px;font-size:12px;text-align:center;white-space:nowrap;color:#262626;">D</div>
<div class="t" style="left:432.0px;top:244.5px;width:40px;height:16px;line-height:16px;font-size:12px;text-align:center;white-space:nowrap;color:#262626;">E</div>
<div class="t" style="left:525.0px;top:244.5px;width:40px;height:16px;line-height:16px;font-size:12px;text-align:center;white-space:nowrap;color:#262626;">F</div>
<div class="t" style="left:618.0px;top:244.5px;width:40px;height:16px;line-height:16px;font-size:12px;text-align:center;white-space:nowrap;color:#262626;">G</div>
<div class="t" style="left:700.5px;top:244.5px;width:40px;height:16px;line-height:16px;font-size:12px;text-align:center;white-space:nowrap;color:#262626;">H</div>
<div class="t" style="left:772.5px;top:244.5px;width:40px;height:16px;line-height:16px;font-size:12px;text-align:center;white-space:nowrap;color:#262626;">I</div>
<div class="t" style="left:844.5px;top:244.5px;width:40px;height:16px;line-height:16px;font-size:12px;text-align:center;white-space:nowrap;color:#262626;">J</div>
<div class="t" style="left:917.0px;top:244.5px;width:40px;height:16px;line-height:16px;font-size:12px;text-align:center;white-space:nowrap;color:#262626;">K</div>
<div class="t" style="left:3.5px;top:274.5px;width:30px;height:16px;line-height:16px;font-size:12.6px;text-align:center;white-space:nowrap;color:#262626;">1</div>
<div class="t" style="left:3.5px;top:301.5px;width:30px;height:16px;line-height:16px;font-size:12.6px;text-align:center;white-space:nowrap;color:#262626;">2</div>
<div class="t" style="left:3.5px;top:328.5px;width:30px;height:16px;line-height:16px;font-size:12.6px;text-align:center;white-space:nowrap;color:#262626;">3</div>
<div class="t" style="left:3.5px;top:355.5px;width:30px;height:16px;line-height:16px;font-size:12.6px;text-align:center;white-space:nowrap;color:#262626;">4</div>
<div class="t" style="left:3.5px;top:382.5px;width:30px;height:16px;line-height:16px;font-size:12.6px;text-align:center;white-space:nowrap;color:#262626;">5</div>
<div class="t" style="left:3.5px;top:409.5px;width:30px;height:16px;line-height:16px;font-size:12.6px;text-align:center;white-space:nowrap;color:#262626;">6</div>
<div class="t" style="left:3.5px;top:436.5px;width:30px;height:16px;line-height:16px;font-size:12.6px;text-align:center;white-space:nowrap;color:#262626;">7</div>
<div class="t" style="left:3.5px;top:463.5px;width:30px;height:16px;line-height:16px;font-size:12.6px;text-align:center;white-space:nowrap;color:#262626;">8</div>
<div class="t" style="left:3.5px;top:490.5px;width:30px;height:16px;line-height:16px;font-size:12.6px;text-align:center;white-space:nowrap;color:#262626;">9</div>
<div class="t" style="left:3.5px;top:517.5px;width:30px;height:16px;line-height:16px;font-size:12.6px;text-align:center;white-space:nowrap;color:#262626;">10</div>
<div class="t" style="left:3.5px;top:544.5px;width:30px;height:16px;line-height:16px;font-size:12.6px;text-align:center;white-space:nowrap;color:#262626;">11</div>
<div class="t" style="left:3.5px;top:571.5px;width:30px;height:16px;line-height:16px;font-size:12.6px;text-align:center;white-space:nowrap;color:#262626;">12</div>
<div class="t" style="left:3.5px;top:598.5px;width:30px;height:16px;line-height:16px;font-size:12.6px;text-align:center;white-space:nowrap;color:#262626;">13</div>
<div style="left:2px;top:617px;width:33px;height:16px;overflow:hidden"><div class="t" style="left:1.5px;top:9.5px;width:30px;height:16px;line-height:16px;font-size:12.6px;text-align:center;white-space:nowrap;color:#262626;">14</div></div>
<div class="t" style="left:-1.0px;top:270.5px;width:120px;height:16px;line-height:16px;font-size:10.5px;text-align:center;white-space:nowrap;color:#fff;-webkit-text-stroke:0;"><span style="font-size:9.7px;position:relative;top:-0.8px">시간대</span></div>
<div class="t" style="left:87.0px;top:270.5px;width:120px;height:16px;line-height:16px;font-size:10.5px;text-align:center;white-space:nowrap;color:#fff;-webkit-text-stroke:0;"><span style="font-size:9.7px;position:relative;top:-0.8px">매출액 합계</span></div>
<div class="t" style="left:201.5px;top:270.5px;width:120px;height:16px;line-height:16px;font-size:10.5px;text-align:center;white-space:nowrap;color:#fff;-webkit-text-stroke:0;">BAG&amp;ACC</div>
<div class="t" style="left:299.0px;top:270.5px;width:120px;height:16px;line-height:16px;font-size:10.5px;text-align:center;white-space:nowrap;color:#fff;-webkit-text-stroke:0;">CASUAL</div>
<div class="t" style="left:392.5px;top:270.5px;width:120px;height:16px;line-height:16px;font-size:10.5px;text-align:center;white-space:nowrap;color:#fff;-webkit-text-stroke:0;"><span style="word-spacing:-1.6px">KIDS &amp; LIFE</span></div>
<div class="t" style="left:485.0px;top:270.5px;width:120px;height:16px;line-height:16px;font-size:10.5px;text-align:center;white-space:nowrap;color:#fff;-webkit-text-stroke:0;">MAN</div>
<div class="t" style="left:578.0px;top:270.5px;width:120px;height:16px;line-height:16px;font-size:10.5px;text-align:center;white-space:nowrap;color:#fff;-webkit-text-stroke:0;">WOMAN</div>
<div class="t" style="left:36.5px;top:297.5px;width:46px;height:16px;line-height:16px;font-size:10.7px;text-align:center;white-space:nowrap;color:#000;-webkit-text-stroke:0.12px;">11시</div>
<div class="t" style="left:118px;top:297.5px;width:90px;height:16px;line-height:16px;font-size:10.7px;text-align:right;white-space:nowrap;color:#000;-webkit-text-stroke:0.22px;">464,054,336</div>
<div class="t" style="left:220px;top:297.5px;width:90px;height:16px;line-height:16px;font-size:10.7px;text-align:right;white-space:nowrap;color:#000;-webkit-text-stroke:0.22px;">62,624,594</div>
<div class="t" style="left:313px;top:297.5px;width:90px;height:16px;line-height:16px;font-size:10.7px;text-align:right;white-space:nowrap;color:#000;-webkit-text-stroke:0.22px;">126,230,592</div>
<div class="t" style="left:406px;top:297.5px;width:90px;height:16px;line-height:16px;font-size:10.7px;text-align:right;white-space:nowrap;color:#000;-webkit-text-stroke:0.22px;">108,138,905</div>
<div class="t" style="left:499px;top:297.5px;width:90px;height:16px;line-height:16px;font-size:10.7px;text-align:right;white-space:nowrap;color:#000;-webkit-text-stroke:0.22px;">82,358,572</div>
<div class="t" style="left:592px;top:297.5px;width:90px;height:16px;line-height:16px;font-size:10.7px;text-align:right;white-space:nowrap;color:#000;-webkit-text-stroke:0.22px;">84,701,674</div>
<div class="t" style="left:36.5px;top:324.5px;width:46px;height:16px;line-height:16px;font-size:10.7px;text-align:center;white-space:nowrap;color:#000;-webkit-text-stroke:0.12px;">12시</div>
<div class="t" style="left:118px;top:324.5px;width:90px;height:16px;line-height:16px;font-size:10.7px;text-align:right;white-space:nowrap;color:#000;-webkit-text-stroke:0.22px;">294,812,715</div>
<div class="t" style="left:220px;top:324.5px;width:90px;height:16px;line-height:16px;font-size:10.7px;text-align:right;white-space:nowrap;color:#000;-webkit-text-stroke:0.22px;">46,510,914</div>
<div class="t" style="left:313px;top:324.5px;width:90px;height:16px;line-height:16px;font-size:10.7px;text-align:right;white-space:nowrap;color:#000;-webkit-text-stroke:0.22px;">56,295,123</div>
<div class="t" style="left:406px;top:324.5px;width:90px;height:16px;line-height:16px;font-size:10.7px;text-align:right;white-space:nowrap;color:#000;-webkit-text-stroke:0.22px;">0</div>
<div class="t" style="left:499px;top:324.5px;width:90px;height:16px;line-height:16px;font-size:10.7px;text-align:right;white-space:nowrap;color:#000;-webkit-text-stroke:0.22px;">92,929,478</div>
<div class="t" style="left:592px;top:324.5px;width:90px;height:16px;line-height:16px;font-size:10.7px;text-align:right;white-space:nowrap;color:#000;-webkit-text-stroke:0.22px;">99,077,199</div>
<div class="t" style="left:36.5px;top:351.5px;width:46px;height:16px;line-height:16px;font-size:10.7px;text-align:center;white-space:nowrap;color:#000;-webkit-text-stroke:0.12px;">13시</div>
<div class="t" style="left:118px;top:351.5px;width:90px;height:16px;line-height:16px;font-size:10.7px;text-align:right;white-space:nowrap;color:#000;-webkit-text-stroke:0.22px;">272,555,873</div>
<div class="t" style="left:220px;top:351.5px;width:90px;height:16px;line-height:16px;font-size:10.7px;text-align:right;white-space:nowrap;color:#000;-webkit-text-stroke:0.22px;">31,268,631</div>
<div class="t" style="left:313px;top:351.5px;width:90px;height:16px;line-height:16px;font-size:10.7px;text-align:right;white-space:nowrap;color:#000;-webkit-text-stroke:0.22px;">48,583,171</div>
<div class="t" style="left:406px;top:351.5px;width:90px;height:16px;line-height:16px;font-size:10.7px;text-align:right;white-space:nowrap;color:#000;-webkit-text-stroke:0.22px;">58,646,143</div>
<div class="t" style="left:499px;top:351.5px;width:90px;height:16px;line-height:16px;font-size:10.7px;text-align:right;white-space:nowrap;color:#000;-webkit-text-stroke:0.22px;">73,032,820</div>
<div class="t" style="left:592px;top:351.5px;width:90px;height:16px;line-height:16px;font-size:10.7px;text-align:right;white-space:nowrap;color:#000;-webkit-text-stroke:0.22px;">61,025,109</div>
<div class="t" style="left:36.5px;top:378.5px;width:46px;height:16px;line-height:16px;font-size:10.7px;text-align:center;white-space:nowrap;color:#000;-webkit-text-stroke:0.12px;">14시</div>
<div class="t" style="left:118px;top:378.5px;width:90px;height:16px;line-height:16px;font-size:10.7px;text-align:right;white-space:nowrap;color:#000;-webkit-text-stroke:0.22px;">238,987,762</div>
<div class="t" style="left:220px;top:378.5px;width:90px;height:16px;line-height:16px;font-size:10.7px;text-align:right;white-space:nowrap;color:#000;-webkit-text-stroke:0.22px;">39,884,579</div>
<div class="t" style="left:313px;top:378.5px;width:90px;height:16px;line-height:16px;font-size:10.7px;text-align:right;white-space:nowrap;color:#000;-webkit-text-stroke:0.22px;">53,921,758</div>
<div class="t" style="left:406px;top:378.5px;width:90px;height:16px;line-height:16px;font-size:10.7px;text-align:right;white-space:nowrap;color:#000;-webkit-text-stroke:0.22px;">0</div>
<div class="t" style="left:499px;top:378.5px;width:90px;height:16px;line-height:16px;font-size:10.7px;text-align:right;white-space:nowrap;color:#000;-webkit-text-stroke:0.22px;">73,926,919</div>
<div class="t" style="left:592px;top:378.5px;width:90px;height:16px;line-height:16px;font-size:10.7px;text-align:right;white-space:nowrap;color:#000;-webkit-text-stroke:0.22px;">71,254,507</div>
<div class="t" style="left:36.5px;top:405.5px;width:46px;height:16px;line-height:16px;font-size:10.7px;text-align:center;white-space:nowrap;color:#000;-webkit-text-stroke:0.12px;">15시</div>
<div class="t" style="left:118px;top:405.5px;width:90px;height:16px;line-height:16px;font-size:10.7px;text-align:right;white-space:nowrap;color:#000;-webkit-text-stroke:0.22px;">223,716,741</div>
<div class="t" style="left:220px;top:405.5px;width:90px;height:16px;line-height:16px;font-size:10.7px;text-align:right;white-space:nowrap;color:#000;-webkit-text-stroke:0.22px;">31,994,787</div>
<div class="t" style="left:313px;top:405.5px;width:90px;height:16px;line-height:16px;font-size:10.7px;text-align:right;white-space:nowrap;color:#000;-webkit-text-stroke:0.22px;">46,572,868</div>
<div class="t" style="left:406px;top:405.5px;width:90px;height:16px;line-height:16px;font-size:10.7px;text-align:right;white-space:nowrap;color:#000;-webkit-text-stroke:0.22px;">47,040,674</div>
<div class="t" style="left:499px;top:405.5px;width:90px;height:16px;line-height:16px;font-size:10.7px;text-align:right;white-space:nowrap;color:#000;-webkit-text-stroke:0.22px;">48,152,883</div>
<div class="t" style="left:592px;top:405.5px;width:90px;height:16px;line-height:16px;font-size:10.7px;text-align:right;white-space:nowrap;color:#000;-webkit-text-stroke:0.22px;">49,955,530</div>
<div class="t" style="left:36.5px;top:432.5px;width:46px;height:16px;line-height:16px;font-size:10.7px;text-align:center;white-space:nowrap;color:#000;-webkit-text-stroke:0.12px;">16시</div>
<div class="t" style="left:118px;top:432.5px;width:90px;height:16px;line-height:16px;font-size:10.7px;text-align:right;white-space:nowrap;color:#000;-webkit-text-stroke:0.22px;">259,546,527</div>
<div class="t" style="left:220px;top:432.5px;width:90px;height:16px;line-height:16px;font-size:10.7px;text-align:right;white-space:nowrap;color:#000;-webkit-text-stroke:0.22px;">39,360,127</div>
<div class="t" style="left:313px;top:432.5px;width:90px;height:16px;line-height:16px;font-size:10.7px;text-align:right;white-space:nowrap;color:#000;-webkit-text-stroke:0.22px;">60,360,096</div>
<div class="t" style="left:406px;top:432.5px;width:90px;height:16px;line-height:16px;font-size:10.7px;text-align:right;white-space:nowrap;color:#000;-webkit-text-stroke:0.22px;">65,011,320</div>
<div class="t" style="left:499px;top:432.5px;width:90px;height:16px;line-height:16px;font-size:10.7px;text-align:right;white-space:nowrap;color:#000;-webkit-text-stroke:0.22px;">52,586,620</div>
<div class="t" style="left:592px;top:432.5px;width:90px;height:16px;line-height:16px;font-size:10.7px;text-align:right;white-space:nowrap;color:#000;-webkit-text-stroke:0.22px;">42,228,365</div>
<div class="t" style="left:36.5px;top:459.5px;width:46px;height:16px;line-height:16px;font-size:10.7px;text-align:center;white-space:nowrap;color:#000;-webkit-text-stroke:0.12px;">17시</div>
<div class="t" style="left:118px;top:459.5px;width:90px;height:16px;line-height:16px;font-size:10.7px;text-align:right;white-space:nowrap;color:#000;-webkit-text-stroke:0.22px;">276,593,888</div>
<div class="t" style="left:220px;top:459.5px;width:90px;height:16px;line-height:16px;font-size:10.7px;text-align:right;white-space:nowrap;color:#000;-webkit-text-stroke:0.22px;">39,055,663</div>
<div class="t" style="left:313px;top:459.5px;width:90px;height:16px;line-height:16px;font-size:10.7px;text-align:right;white-space:nowrap;color:#000;-webkit-text-stroke:0.22px;">83,818,806</div>
<div class="t" style="left:406px;top:459.5px;width:90px;height:16px;line-height:16px;font-size:10.7px;text-align:right;white-space:nowrap;color:#000;-webkit-text-stroke:0.22px;">0</div>
<div class="t" style="left:499px;top:459.5px;width:90px;height:16px;line-height:16px;font-size:10.7px;text-align:right;white-space:nowrap;color:#000;-webkit-text-stroke:0.22px;">57,509,098</div>
<div class="t" style="left:592px;top:459.5px;width:90px;height:16px;line-height:16px;font-size:10.7px;text-align:right;white-space:nowrap;color:#000;-webkit-text-stroke:0.22px;">96,210,322</div>
<div class="t" style="left:36.5px;top:486.5px;width:46px;height:16px;line-height:16px;font-size:10.7px;text-align:center;white-space:nowrap;color:#000;-webkit-text-stroke:0.12px;">18시</div>
<div class="t" style="left:118px;top:486.5px;width:90px;height:16px;line-height:16px;font-size:10.7px;text-align:right;white-space:nowrap;color:#000;-webkit-text-stroke:0.22px;">290,032,280</div>
<div class="t" style="left:220px;top:486.5px;width:90px;height:16px;line-height:16px;font-size:10.7px;text-align:right;white-space:nowrap;color:#000;-webkit-text-stroke:0.22px;">43,424,290</div>
<div class="t" style="left:313px;top:486.5px;width:90px;height:16px;line-height:16px;font-size:10.7px;text-align:right;white-space:nowrap;color:#000;-webkit-text-stroke:0.22px;">48,618,273</div>
<div class="t" style="left:406px;top:486.5px;width:90px;height:16px;line-height:16px;font-size:10.7px;text-align:right;white-space:nowrap;color:#000;-webkit-text-stroke:0.22px;">0</div>
<div class="t" style="left:499px;top:486.5px;width:90px;height:16px;line-height:16px;font-size:10.7px;text-align:right;white-space:nowrap;color:#000;-webkit-text-stroke:0.22px;">71,312,639</div>
<div class="t" style="left:592px;top:486.5px;width:90px;height:16px;line-height:16px;font-size:10.7px;text-align:right;white-space:nowrap;color:#000;-webkit-text-stroke:0.22px;">126,677,078</div>
<div class="t" style="left:36.5px;top:513.5px;width:46px;height:16px;line-height:16px;font-size:10.7px;text-align:center;white-space:nowrap;color:#000;-webkit-text-stroke:0.12px;">19시</div>
<div class="t" style="left:118px;top:513.5px;width:90px;height:16px;line-height:16px;font-size:10.7px;text-align:right;white-space:nowrap;color:#000;-webkit-text-stroke:0.22px;">224,180,268</div>
<div class="t" style="left:220px;top:513.5px;width:90px;height:16px;line-height:16px;font-size:10.7px;text-align:right;white-space:nowrap;color:#000;-webkit-text-stroke:0.22px;">35,276,766</div>
<div class="t" style="left:313px;top:513.5px;width:90px;height:16px;line-height:16px;font-size:10.7px;text-align:right;white-space:nowrap;color:#000;-webkit-text-stroke:0.22px;">49,675,765</div>
<div class="t" style="left:406px;top:513.5px;width:90px;height:16px;line-height:16px;font-size:10.7px;text-align:right;white-space:nowrap;color:#000;-webkit-text-stroke:0.22px;">53,747,755</div>
<div class="t" style="left:499px;top:513.5px;width:90px;height:16px;line-height:16px;font-size:10.7px;text-align:right;white-space:nowrap;color:#000;-webkit-text-stroke:0.22px;">48,841,587</div>
<div class="t" style="left:592px;top:513.5px;width:90px;height:16px;line-height:16px;font-size:10.7px;text-align:right;white-space:nowrap;color:#000;-webkit-text-stroke:0.22px;">36,638,395</div>
<div class="t" style="left:36.5px;top:540.5px;width:46px;height:16px;line-height:16px;font-size:10.7px;text-align:center;white-space:nowrap;color:#000;-webkit-text-stroke:0.12px;">20시</div>
<div class="t" style="left:118px;top:540.5px;width:90px;height:16px;line-height:16px;font-size:10.7px;text-align:right;white-space:nowrap;color:#000;-webkit-text-stroke:0.22px;">270,432,077</div>
<div class="t" style="left:220px;top:540.5px;width:90px;height:16px;line-height:16px;font-size:10.7px;text-align:right;white-space:nowrap;color:#000;-webkit-text-stroke:0.22px;">51,315,769</div>
<div class="t" style="left:313px;top:540.5px;width:90px;height:16px;line-height:16px;font-size:10.7px;text-align:right;white-space:nowrap;color:#000;-webkit-text-stroke:0.22px;">70,015,171</div>
<div class="t" style="left:406px;top:540.5px;width:90px;height:16px;line-height:16px;font-size:10.7px;text-align:right;white-space:nowrap;color:#000;-webkit-text-stroke:0.22px;">57,132,637</div>
<div class="t" style="left:499px;top:540.5px;width:90px;height:16px;line-height:16px;font-size:10.7px;text-align:right;white-space:nowrap;color:#000;-webkit-text-stroke:0.22px;">39,177,219</div>
<div class="t" style="left:592px;top:540.5px;width:90px;height:16px;line-height:16px;font-size:10.7px;text-align:right;white-space:nowrap;color:#000;-webkit-text-stroke:0.22px;">52,791,281</div>
<div class="t" style="left:36.5px;top:567.5px;width:46px;height:16px;line-height:16px;font-size:10.7px;text-align:center;white-space:nowrap;color:#000;-webkit-text-stroke:0.12px;">21시</div>
<div class="t" style="left:118px;top:567.5px;width:90px;height:16px;line-height:16px;font-size:10.7px;text-align:right;white-space:nowrap;color:#000;-webkit-text-stroke:0.22px;">235,495,798</div>
<div class="t" style="left:220px;top:567.5px;width:90px;height:16px;line-height:16px;font-size:10.7px;text-align:right;white-space:nowrap;color:#000;-webkit-text-stroke:0.22px;">41,394,887</div>
<div class="t" style="left:313px;top:567.5px;width:90px;height:16px;line-height:16px;font-size:10.7px;text-align:right;white-space:nowrap;color:#000;-webkit-text-stroke:0.22px;">49,137,091</div>
<div class="t" style="left:406px;top:567.5px;width:90px;height:16px;line-height:16px;font-size:10.7px;text-align:right;white-space:nowrap;color:#000;-webkit-text-stroke:0.22px;">50,408,792</div>
<div class="t" style="left:499px;top:567.5px;width:90px;height:16px;line-height:16px;font-size:10.7px;text-align:right;white-space:nowrap;color:#000;-webkit-text-stroke:0.22px;">48,382,726</div>
<div class="t" style="left:592px;top:567.5px;width:90px;height:16px;line-height:16px;font-size:10.7px;text-align:right;white-space:nowrap;color:#000;-webkit-text-stroke:0.22px;">46,172,302</div>
<div class="t" style="left:36.5px;top:594.5px;width:46px;height:16px;line-height:16px;font-size:10.7px;text-align:center;white-space:nowrap;color:#000;-webkit-text-stroke:0.12px;">22시</div>
<div class="t" style="left:118px;top:594.5px;width:90px;height:16px;line-height:16px;font-size:10.7px;text-align:right;white-space:nowrap;color:#000;-webkit-text-stroke:0.22px;">208,509,580</div>
<div class="t" style="left:220px;top:594.5px;width:90px;height:16px;line-height:16px;font-size:10.7px;text-align:right;white-space:nowrap;color:#000;-webkit-text-stroke:0.22px;">25,069,950</div>
<div class="t" style="left:313px;top:594.5px;width:90px;height:16px;line-height:16px;font-size:10.7px;text-align:right;white-space:nowrap;color:#000;-webkit-text-stroke:0.22px;">40,369,082</div>
<div class="t" style="left:406px;top:594.5px;width:90px;height:16px;line-height:16px;font-size:10.7px;text-align:right;white-space:nowrap;color:#000;-webkit-text-stroke:0.22px;">60,001,476</div>
<div class="t" style="left:499px;top:594.5px;width:90px;height:16px;line-height:16px;font-size:10.7px;text-align:right;white-space:nowrap;color:#000;-webkit-text-stroke:0.22px;">42,182,819</div>
<div class="t" style="left:592px;top:594.5px;width:90px;height:16px;line-height:16px;font-size:10.7px;text-align:right;white-space:nowrap;color:#000;-webkit-text-stroke:0.22px;">40,886,254</div>
<div style="left:82px;top:293px;width:604px;height:324px;border:2px solid #e6001a"></div>
<div style="left:2px;top:633px;width:942px;height:1px;background:#a0a0a0"></div>
<div style="left:943px;top:265px;width:1px;height:369px;background:#a0a0a0"></div>
<div style="left:947px;top:246px;width:15px;height:15px;background:#fff;border:1px solid #c0c0c0"></div>
<div style="left:947px;top:261px;width:15px;height:358px;background:#d9d9d9"></div>
<div style="left:947px;top:261px;width:15px;height:232px;background:#fff;border:1px solid #ababab"></div>
<div style="left:947px;top:619px;width:15px;height:15px;background:#fff;border:1px solid #c0c0c0"></div>
<div style="left:143px;top:634px;width:42px;height:24px;background:#fff;border-left:1px solid #ababab;border-right:1px solid #ababab;border-bottom:2px solid #217346"></div>
<div class="t" style="left:42.0px;top:638.0px;width:160px;height:16px;line-height:16px;font-size:13px;text-align:center;white-space:nowrap;color:#444;-webkit-text-stroke:0;">V1</div>
<div class="t" style="left:83.0px;top:638.0px;width:160px;height:16px;line-height:16px;font-size:13px;text-align:center;white-space:nowrap;color:#217346;-webkit-text-stroke:0;">V2</div>
<div class="t" style="left:124.0px;top:638.0px;width:160px;height:16px;line-height:16px;font-size:13px;text-align:center;white-space:nowrap;color:#444;-webkit-text-stroke:0;">V3</div>
<div class="t" style="left:164.5px;top:638.0px;width:160px;height:16px;line-height:16px;font-size:13px;text-align:center;white-space:nowrap;color:#444;-webkit-text-stroke:0;">T1</div>
<div class="t" style="left:204.5px;top:638.0px;width:160px;height:16px;line-height:16px;font-size:13px;text-align:center;white-space:nowrap;color:#444;-webkit-text-stroke:0;">T2</div>
<div class="t" style="left:263.0px;top:638.0px;width:160px;height:16px;line-height:16px;font-size:13px;text-align:center;white-space:nowrap;color:#444;-webkit-text-stroke:0;">V_image</div>
<div class="t" style="left:373.0px;top:638.0px;width:160px;height:16px;line-height:16px;font-size:13px;text-align:center;white-space:nowrap;color:#444;-webkit-text-stroke:0;">MX-GRID 사용 안내</div>
<div style="left:102px;top:637px;width:1px;height:20px;background:#ababab"></div>
<div style="left:225px;top:637px;width:1px;height:20px;background:#ababab"></div>
<div style="left:265px;top:637px;width:1px;height:20px;background:#ababab"></div>
<div style="left:305px;top:637px;width:1px;height:20px;background:#ababab"></div>
<div style="left:382px;top:637px;width:1px;height:20px;background:#ababab"></div>
<div style="left:2px;top:661px;width:962px;height:1px;background:#c6c6c6"></div>
<div style="left:2px;top:662px;width:962px;height:21px;background:#f3f3f3"></div>
<div class="t" style="left:9.4px;top:664.0px;width:200px;height:16px;line-height:16px;font-size:12px;text-align:left;white-space:nowrap;color:#262626;">준비</div>
<div class="t" style="left:916px;top:663.5px;width:200px;height:16px;line-height:16px;font-size:12px;text-align:left;white-space:nowrap;color:#444;">100%</div>
<svg style="left:797px;top:12px" width="14" height="11" viewBox="0 0 14 11"><rect x="0.5" y="0.5" width="12.6" height="9.6" fill="none" stroke="#fff"/><rect x="0.5" y="0.5" width="12.6" height="2" fill="#fff"/><path d="M6.8,4.4 V8.6" stroke="#fff" stroke-width="1"/><path d="M4.6,6.4 L6.8,4.2 L9,6.4" fill="none" stroke="#fff" stroke-width="1"/></svg>
<div style="left:845px;top:17px;width:10px;height:1px;background:#fff"></div>
<div style="left:891.5px;top:12.5px;width:10px;height:10px;border:1px solid #fff"></div>
<svg style="left:937px;top:12px" width="11" height="11" viewBox="0 0 11 11"><path d="M0.3,0.3 L10,10 M10,0.3 L0.3,10" stroke="#fff" stroke-width="1.1"/></svg>
<svg style="left:817px;top:43px" width="13" height="16" viewBox="0 0 13 16"><path d="M4.2,10.6 Q4,9 2.6,7.6 A4.9,4.9 0 1 1 10,7.6 Q8.6,9 8.4,10.6 Z" fill="none" stroke="#fff" stroke-width="1.1"/><path d="M4.4,12.4 H8.2 M5,14.4 H7.6" stroke="#fff" stroke-width="1.1"/></svg>
<svg style="left:897px;top:43px" width="17" height="17" viewBox="0 0 17 17"><circle cx="8.4" cy="5.4" r="4.6" fill="none" stroke="#fff" stroke-width="1.15"/><path d="M1,15.6 Q1.6,10.4 5.6,9.2" fill="none" stroke="#fff" stroke-width="1.15"/><path d="M11.8,8.2 V15.4 M8.2,11.8 H15.4" stroke="#fff" stroke-width="1.3"/></svg>
<svg style="left:10px;top:170px" width="15" height="15" viewBox="0 0 15 15"><rect x="0.6" y="0.6" width="13.8" height="13.8" fill="#fff" stroke="#6a6a6a" stroke-width="1.2"/><path d="M0.6,3.8 H14.4 M0.6,11.2 H14.4 M7.5,0.6 V3.8 M7.5,11.2 V14.4" stroke="#6a6a6a" stroke-width="1.2"/><path d="M3.2,7.5 H11.8" stroke="#3d79bb" stroke-width="1.1"/><polygon points="1.8,7.5 4.2,5.8 4.2,9.2" fill="#3d79bb"/><polygon points="13.2,7.5 10.8,5.8 10.8,9.2" fill="#3d79bb"/></svg>
<svg style="left:40px;top:171px" width="14" height="14" viewBox="0 0 14 14"><rect x="0.2" y="0.1" width="13.7" height="13.8" rx="1" fill="#8347a6"/><path d="M2,1.1 H11.9 V6 L11,7 H2.9 L2,6 Z" fill="#fff"/><rect x="2.8" y="8.9" width="8.4" height="4.3" fill="#fff"/><rect x="5" y="11" width="1.9" height="2.4" fill="#8347a6"/></svg>
<svg style="left:68px;top:170px" width="16" height="15" viewBox="0 0 16 15"><path d="M2.4,5.2 H9.4 Q14,5.6 14,9.4 Q13.6,13 9,13.4" fill="none" stroke="#3573b9" stroke-width="2.3"/><path d="M6.6,0.8 L2.2,5.2 L6.6,9.6" fill="none" stroke="#3573b9" stroke-width="2.3"/></svg>
<svg style="left:88.4px;top:176.20000000000002px" width="6" height="3.4" viewBox="0 0 6 3.4"><polygon points="0,0 6,0 3.0,3.4" fill="#444"/></svg>
<svg style="left:103px;top:170px" width="16" height="15" viewBox="0 0 16 15"><path d="M13.6,5.2 H6.6 Q2,5.6 2,9.4 Q2.4,13 7,13.4" fill="none" stroke="#b4b4b4" stroke-width="2.3"/><path d="M9.4,0.8 L13.8,5.2 L9.4,9.6" fill="none" stroke="#b4b4b4" stroke-width="2.3"/></svg>
<svg style="left:123.8px;top:176.1px" width="5" height="3" viewBox="0 0 5 3"><polygon points="0,0 5,0 2.5,3" fill="#bdbdbd"/></svg>
<svg style="left:137px;top:170px" width="18" height="15" viewBox="0 0 18 15"><path d="M1.4,13.6 V3 H7 L8.6,1 H13.4 V4.4" fill="#fbf0d9" stroke="#eac282" stroke-width="1.3"/><path d="M1,14 L4,6 H17.2 L14.6,14 Z" fill="#eac282"/></svg>
<svg style="left:167px;top:172px" width="16" height="12" viewBox="0 0 16 12"><rect x="0" y="2.4" width="16" height="9.6" rx="0.8" fill="#6a6a6a"/><rect x="5" y="0" width="6" height="3.4" fill="#6a6a6a"/><circle cx="8" cy="7" r="3.1" fill="none" stroke="#e6e6e6" stroke-width="1.3"/><rect x="1.2" y="3.6" width="1.4" height="1.2" fill="#e6e6e6"/></svg>
<div style="left:200.5px;top:176px;width:6px;height:1px;background:#666"></div>
<svg style="left:200.5px;top:178.39999999999998px" width="6" height="3.6" viewBox="0 0 6 3.6"><polygon points="0,0 6,0 3.0,3.6" fill="#666"/></svg>
<svg style="left:426.0px;top:217.2px" width="7" height="4" viewBox="0 0 7 4"><polygon points="0,0 7,0 3.5,4" fill="#666"/></svg>
<div style="left:454px;top:215px;width:2px;height:2px;background:#b0b0b0"></div>
<div style="left:454px;top:219px;width:2px;height:2px;background:#b0b0b0"></div>
<div style="left:454px;top:223px;width:2px;height:2px;background:#b0b0b0"></div>
<svg style="left:483px;top:215px" width="12" height="10" viewBox="0 0 12 10"><path d="M0.8,0.6 L10.8,9.4 M10.8,0.6 L0.8,9.4" stroke="#b4b4b4" stroke-width="1.4"/></svg>
<svg style="left:518px;top:214px" width="15" height="12" viewBox="0 0 15 12"><path d="M1,6.6 L5,10.6 L13.4,1" fill="none" stroke="#c4c4c4" stroke-width="2"/></svg>
<div class="t" style="left:553.5px;top:209.6px;width:14px;height:18px;line-height:18px;font-size:14.5px;text-align:center;white-space:nowrap;color:#444;font-family:'Liberation Serif',serif;font-weight:bold;"><i>f</i></div>
<div class="t" style="left:560.4px;top:215.2px;width:10px;height:12px;line-height:12px;font-size:11.5px;text-align:center;white-space:nowrap;color:#444;font-family:'Liberation Serif',serif;font-weight:bold;"><i>x</i></div>
<svg style="left:947px;top:216px" width="9" height="7" viewBox="0 0 9 7"><path d="M1,1.2 L4.4,4.8 L7.8,1.2" fill="none" stroke="#666" stroke-width="1.7"/></svg>
<svg style="left:18px;top:248px" width="15" height="14" viewBox="0 0 15 14"><polygon points="14,0.4 14,13.4 0.6,13.4" fill="#b4b4b4"/></svg>
<svg style="left:951.0px;top:251.5px" width="7" height="4" viewBox="0 0 7 4"><polygon points="0,4 7,4 3.5,0" fill="#777"/></svg>
<svg style="left:951.0px;top:625.0px" width="7" height="4" viewBox="0 0 7 4"><polygon points="0,0 7,0 3.5,4" fill="#777"/></svg>
<div style="left:597px;top:640px;width:15px;height:15px;background:#fff;border:1px solid #c0c0c0"></div>
<div style="left:931px;top:640px;width:15px;height:15px;background:#fff;border:1px solid #c0c0c0"></div>
<div style="left:612px;top:640px;width:317px;height:15px;background:#d9d9d9"></div>
<div style="left:611px;top:640px;width:217px;height:15px;background:#fff;border:1px solid #ababab"></div>
<svg style="left:602px;top:644px" width="4" height="7" viewBox="0 0 4 7"><polygon points="4,0 4,7 0,3.5" fill="#666"/></svg>
<svg style="left:937px;top:644px" width="4" height="7" viewBox="0 0 4 7"><polygon points="0,0 0,7 4,3.5" fill="#666"/></svg>
<div style="left:580px;top:642px;width:2px;height:2px;background:#b0b0b0"></div>
<div style="left:580px;top:646px;width:2px;height:2px;background:#b0b0b0"></div>
<div style="left:580px;top:650px;width:2px;height:2px;background:#b0b0b0"></div>
<svg style="left:29px;top:643px" width="5" height="7" viewBox="0 0 5 7"><polygon points="4.6,0 4.6,7 0.2,3.5" fill="#c2c2c2"/></svg>
<svg style="left:58px;top:643px" width="5" height="8" viewBox="0 0 5 8"><polygon points="0,0 0,7.6 4.6,3.8" fill="#1e6e3e"/></svg>
<div style="left:520px;top:648px;width:2px;height:2px;background:#1e6e3e"></div>
<div style="left:524.3px;top:648px;width:2px;height:2px;background:#1e6e3e"></div>
<div style="left:528.6px;top:648px;width:2px;height:2px;background:#1e6e3e"></div>
<svg style="left:543px;top:638px" width="18" height="18" viewBox="0 0 18 18"><circle cx="9" cy="9" r="7.6" fill="none" stroke="#777" stroke-width="1.2"/><path d="M9,5 V13 M5,9 H13" stroke="#555" stroke-width="1.5"/></svg>
<svg style="left:53px;top:665px" width="13" height="13" viewBox="0 0 13 13"><circle cx="3.4" cy="3.2" r="3" fill="#6a6a6a"/><path d="M7,1.5 H12.5 V12.5 H1.5 V7" fill="none" stroke="#6a6a6a" stroke-width="1"/><path d="M7,1.8 H12.5" stroke="#6a6a6a" stroke-width="2"/><path d="M3.4,7.2 H5.2 M6.6,7.2 H8.4 M9.8,7.2 H11.4 M3.4,9.2 H5.2 M6.6,9.2 H8.4 M9.8,9.2 H11.4 M3.4,11.2 H5.2 M6.6,11.2 H8.4 M9.8,11.2 H11.4 M6.6,5.2 H8.4 M9.8,5.2 H11.4" stroke="#6a6a6a" stroke-width="1"/></svg>
<div style="left:664px;top:662px;width:38px;height:21px;background:#c6c6c6"></div>
<svg style="left:676px;top:665px" width="13" height="13" viewBox="0 0 13 13"><rect x="0.5" y="0.5" width="12" height="12" fill="none" stroke="#555"/><path d="M0.5,4.5 H12.5 M0.5,8.5 H12.5 M4.5,0.5 V12.5 M8.5,0.5 V12.5" stroke="#555"/></svg>
<svg style="left:714px;top:665px" width="15" height="13" viewBox="0 0 15 13"><rect x="0.5" y="0.5" width="13.6" height="12" fill="none" stroke="#555"/><rect x="3.5" y="3.5" width="7.6" height="6" fill="none" stroke="#555"/><path d="M5,5.5 H10 M5,7.5 H10" stroke="#555" stroke-width="0.8"/></svg>
<svg style="left:752px;top:665px" width="14" height="13" viewBox="0 0 14 13"><rect x="0.5" y="0.5" width="13" height="12" fill="none" stroke="#555"/><path d="M4.5,0.5 V6.5 H0.5 M9.5,0.5 V6.5 H4.5" fill="none" stroke="#555"/></svg>
<div style="left:783px;top:670.5px;width:6px;height:2px;background:#555"></div>
<div style="left:793px;top:671px;width:100px;height:1px;background:#999"></div>
<div style="left:841px;top:665.5px;width:5px;height:12px;background:#666"></div>
<div style="left:896.5px;top:670.5px;width:7px;height:2px;background:#555"></div>
<div style="left:899px;top:668px;width:2px;height:7px;background:#555"></div>
<div style="left:0px;top:0px;width:965px;height:1px;background:#a6a0a3"></div>
<div style="left:0px;top:0px;width:1px;height:686px;background:#b9b9b9"></div>
<div style="left:1px;top:1px;width:1px;height:683px;background:#217346"></div>
<div style="left:964px;top:0px;width:1px;height:686px;background:#aaa"></div>
<div style="left:1px;top:683px;width:963px;height:1px;background:#217346"></div>
<div style="left:0px;top:684px;width:965px;height:2px;background:#b4b4b4"></div>
</body></html>
